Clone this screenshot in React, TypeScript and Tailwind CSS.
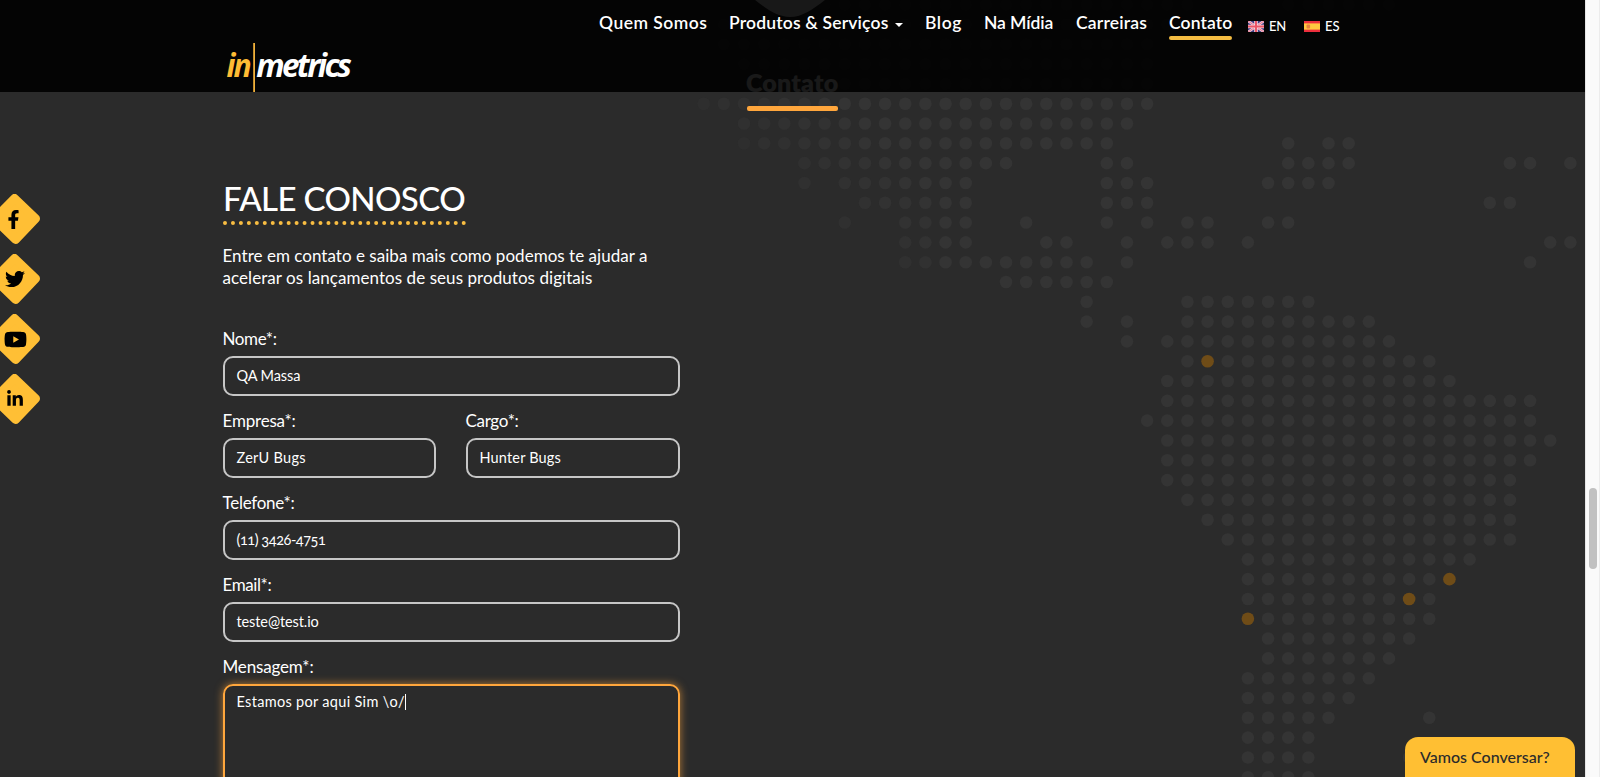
import { FaFacebookF, FaLinkedinIn, FaTwitter, FaYoutube } from "react-icons/fa";

type Span = [number, number];

// Filled column ranges of the dotted world map, one entry per row.
const FIRST_ROW = -5;
const MAP_ROWS: Span[][] = [
  [[6, 24], [29, 34]],
  [[-2, 23]],
  [[-1, 22]],
  [[2, 22]],
  [[0, 0], [2, 22]],
  [[0, 22]],
  [[2, 21]],
  [[2, 20], [29, 29], [31, 32]],
  [[5, 15], [20, 21], [29, 32], [40, 41], [43, 43]],
  [[5, 5], [7, 13], [20, 22], [28, 31]],
  [[8, 13], [20, 22], [39, 40]],
  [[7, 7], [10, 13], [16, 16], [20, 20], [22, 22], [24, 25], [28, 29]],
  [[10, 13], [17, 18], [21, 21], [23, 25], [27, 27], [42, 43]],
  [[10, 19], [21, 21], [41, 41]],
  [[15, 20]],
  [[19, 19], [24, 30]],
  [[19, 19], [21, 21], [24, 33]],
  [[21, 21], [23, 34]],
  [[24, 36]],
  [[23, 37]],
  [[23, 41]],
  [[22, 41]],
  [[23, 42]],
  [[23, 41]],
  [[23, 40]],
  [[24, 40]],
  [[25, 40]],
  [[26, 40]],
  [[27, 38]],
  [[27, 37]],
  [[27, 36]],
  [[27, 36]],
  [[28, 35]],
  [[28, 34]],
  [[27, 33]],
  [[27, 32]],
  [[27, 31], [36, 36]],
  [[27, 30]],
  [[27, 30], [35, 35]],
  [[27, 30]],
];
const OFFICES = ["13:25", "24:37", "25:35", "26:27"];

function WorldMap() {
  const dots = MAP_ROWS.flatMap((spans, i) => {
    const row = i + FIRST_ROW;
    return spans.flatMap(([from, to]) =>
      Array.from({ length: to - from + 1 }, (_, k) => {
        const col = from + k;
        const office = OFFICES.includes(`${row}:${col}`);
        const fade = col >= 12 ? 1 : Math.min(1, Math.max(0.25, 0.45 + (col - row) * 0.08));
        return (
          <circle
            key={`${row}:${col}`}
            cx={703.7 + 20.155 * col}
            cy={103.7 + 19.81 * row}
            r={6.3}
            fill={office ? "#6f4c17" : "#343434"}
            opacity={fade}
          />
        );
      }),
    );
  });
  return (
    <svg className="absolute inset-0" width="1585" height="777" viewBox="0 0 1585 777" aria-hidden="true">
      {dots}
      <path d="M750 -4 C764 7 776 17 790 17 C804 17 816 7 830 -4 Z" fill="#ffffff" opacity="0.93" />
    </svg>
  );
}

function Logo() {
  return (
    <svg className="mt-[43px] ml-[223px] shrink-0" width="136" height="49" viewBox="0 0 136 49">
      <g fontFamily="'Open Sans', sans-serif" fontStyle="italic" fontSize="32" fontWeight="700">
        <text transform="translate(3.6 34) scale(.94 1)" letterSpacing="-2.2" fill="#ffbc34">in</text>
        <text transform="translate(33.2 34) scale(.98 1)" letterSpacing="-2.64" fill="#ffffff">metrics</text>
      </g>
      <rect x="30.2" y="0" width="1.8" height="49" fill="#f0b03a" />
    </svg>
  );
}

function FlagUK() {
  return (
    <svg width="16" height="11" viewBox="0 0 16 11">
      <rect width="16" height="11" fill="#3c3c82" />
      <path d="M0 0 L16 11 M16 0 L0 11" stroke="#f3c6d4" strokeWidth="2.6" />
      <path d="M0 0 L16 11 M16 0 L0 11" stroke="#e0607a" strokeWidth="0.8" />
      <path d="M8 0 V11 M0 5.5 H16" stroke="#f8d5dc" strokeWidth="3.6" />
      <path d="M8 0 V11 M0 5.5 H16" stroke="#ec5566" strokeWidth="2" />
    </svg>
  );
}

function FlagSpain() {
  return (
    <svg width="16" height="11" viewBox="0 0 16 11">
      <rect width="16" height="11" fill="#ed2f3d" />
      <rect y="2.4" width="16" height="6.2" fill="#ffc840" />
      <rect x="2.5" y="3.4" width="3.6" height="4" rx="1" fill="#e5813f" />
    </svg>
  );
}

function Header() {
  return (
    <header className="absolute top-0 left-0 flex h-[92px] w-[1585px] items-start bg-black/90 text-white">
      <Logo />
      <nav className="ml-[240px] flex items-start pt-[11px] text-[17.5px] leading-[24px] font-semibold whitespace-nowrap">
        <a className="w-[130px] tracking-[0.48px]">Quem Somos</a>
        <a className="flex w-[196px] items-center tracking-[0.17px]">
          Produtos &amp; Serviços
          <svg className="mt-[4px] ml-[7px]" width="8" height="4" viewBox="0 0 8 4">
            <path d="M0 0 H8 L4 4 Z" fill="#ffffff" />
          </svg>
        </a>
        <a className="w-[59px] tracking-[0.6px]">Blog</a>
        <a className="w-[92px] tracking-[-0.1px]">Na Mídia</a>
        <a className="w-[93px] tracking-[0.18px]">Carreiras</a>
        <a className="w-[63px] tracking-[0.13px]">
          Contato
          <span className="mt-[1px] block h-[4px] rounded-[2px] bg-[#f4bc42]" />
        </a>
      </nav>
      <div className="ml-[16px] flex items-center gap-[18px] pt-[16px] text-[13px] leading-[20px] font-medium">
        <a className="flex w-[38px] items-center gap-[5px]">
          <span className="pt-[1px]"><FlagUK /></span>
          <span className="tracking-[-0.3px]">EN</span>
        </a>
        <a className="flex items-center gap-[5px]">
          <span className="pt-[1px]"><FlagSpain /></span>
          <span>ES</span>
        </a>
      </div>
    </header>
  );
}

function Field({ label, value, labelClass, valueClass }: { label: string; value: string; labelClass: string; valueClass: string }) {
  return (
    <div>
      <div className={`-ml-[0.5px] h-[30px] pt-[1px] text-[17px] leading-[24px] ${labelClass}`}>{label}</div>
      <div className={`h-[40px] rounded-[10px] border-2 border-[#c6c6c6] pl-[11.5px] text-[14.5px] leading-[36px] ${valueClass}`}>{value}</div>
    </div>
  );
}

const SOCIAL = [
  { name: "facebook", icon: <FaFacebookF size={19} />, place: "relative pr-[3px]" },
  { name: "twitter", icon: <FaTwitter size={20} />, place: "relative" },
  { name: "youtube", icon: <FaYoutube size={23} />, place: "relative" },
  { name: "linkedin", icon: <FaLinkedinIn size={18} />, place: "relative" },
];

function SocialBar() {
  return (
    <aside className="absolute top-[194px] left-[-10px] flex flex-col gap-[10px] text-black">
      {SOCIAL.map(({ name, icon, place }) => (
        <a key={name} className="relative flex h-[50px] w-[50px] items-center justify-center">
          <svg className="absolute inset-0" width="50" height="50" viewBox="0 0 50 50">
            <path d="M24.6 4.2 L45.8 24.6 L25.6 45.8 L4.2 25 Z" fill="#ffbf35" stroke="#ffbf35" strokeWidth="8.4" strokeLinejoin="round" />
          </svg>
          <span className={place}>{icon}</span>
        </a>
      ))}
    </aside>
  );
}

export default function App() {
  return (
    <div className="relative flex h-[777px] w-[1600px] overflow-hidden bg-[#2b2b2b] font-['Lato',sans-serif] text-white">
      <WorldMap />
      <main className="relative w-[1585px]">
        <div className="ml-[747px] w-[91px] pt-[68px]">
          <h1 className="-ml-[1px] h-[38px] text-[25px] leading-[28px] font-extrabold tracking-[0.2px]">Contato</h1>
          <div className="h-[5px] rounded-[2px] bg-[#ffa63c]" />
        </div>
        <section className="mt-[66px] ml-[223px] w-[457px]">
          <h2 className="h-[48px] w-[243px] border-b-4 border-dotted border-[#f8bd42] text-[33px] leading-[42px] font-medium tracking-[-0.61px] whitespace-nowrap">
            FALE CONOSCO
          </h2>
          <p className="mt-[20px] -ml-[0.5px] text-[17px] leading-[22px] whitespace-nowrap">
            <span className="tracking-[0.03px]">Entre em contato e saiba mais como podemos te ajudar a</span>
            <br />
            <span className="tracking-[0.06px]">acelerar os lançamentos de seus produtos digitais</span>
          </p>
          <form className="mt-[37px] flex flex-col gap-[12px]">
            <Field label="Nome*:" value="QA Massa" labelClass="tracking-[-0.4px]" valueClass="tracking-[-0.1px]" />
            <div className="grid grid-cols-[213px_214px] gap-[30px]">
              <Field label="Empresa*:" value="ZerU Bugs" labelClass="tracking-[-0.2px]" valueClass="tracking-[0.28px]" />
              <Field label="Cargo*:" value="Hunter Bugs" labelClass="tracking-[-0.31px]" valueClass="tracking-[0.17px]" />
            </div>
            <Field label="Telefone*:" value="(11) 3426-4751" labelClass="tracking-[-0.27px]" valueClass="tracking-[-0.45px] [font-feature-settings:'onum']" />
            <Field label="Email*:" value="teste@test.io" labelClass="tracking-[-0.4px]" valueClass="tracking-[-0.1px]" />
            <div>
              <div className="-ml-[0.5px] h-[30px] pt-[1px] text-[17px] leading-[24px] tracking-[-0.16px]">Mensagem*:</div>
              <div className="flex h-[120px] items-start rounded-[10px] border-2 border-[#ffa63c] pt-[6px] pl-[11.5px] text-[14.5px] leading-[20px] tracking-[0.31px] shadow-[0_0_8px_rgba(255,166,60,0.65)]">
                Estamos por aqui Sim \o/
                <span className="mt-[2px] h-[16px] w-px bg-white" />
              </div>
            </div>
          </form>
        </section>
      </main>
      <Header />
      <SocialBar />
      <div className="absolute right-[25px] bottom-0 h-[40px] w-[170px] rounded-t-[13px] bg-[#ffbf33] pl-[15px] text-[16px] leading-[40px] font-medium text-[#2b2b2b]">
        Vamos Conversar?
      </div>
      <div className="relative h-full w-[15px] border-x border-l-[#e6e6e6] border-r-[#ececec] bg-[#fafafa] pt-[488px] pl-[3px]">
        <div className="h-[81px] w-[8px] rounded-full bg-[#c1c1c1]" />
      </div>
    </div>
  );
}
